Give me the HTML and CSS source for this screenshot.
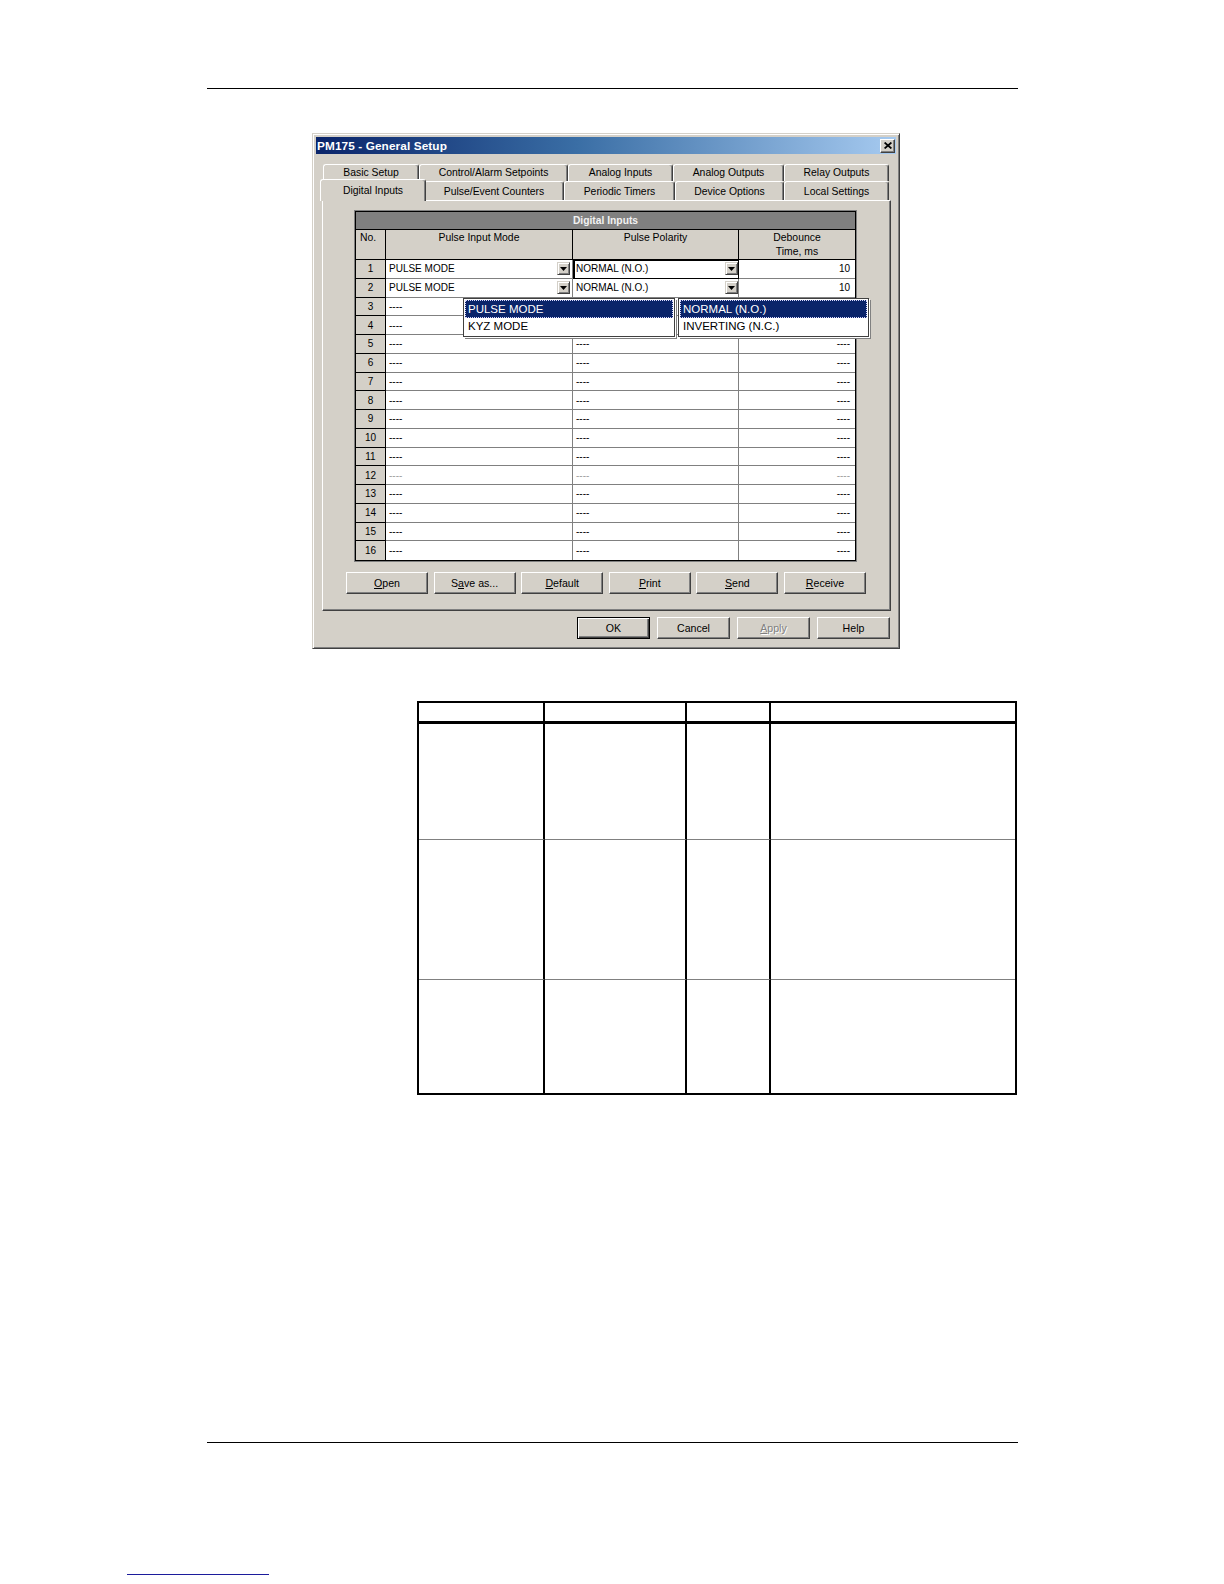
FILE: index.html
```html
<!DOCTYPE html>
<html lang="en">
<head>
<meta charset="utf-8">
<title>PM175 - General Setup</title>
<link rel="stylesheet" href="styles.css">
</head>
<body>
<div class="page">
  <div class="rule rule-top"></div>

  <div class="dialog">
    <div class="titlebar">
      <span class="title">PM175 - General Setup</span>
      <span class="close-btn"><svg width="8" height="7" viewBox="0 0 8 7"><path d="M0.6 0.5 L7.4 6.5 M7.4 0.5 L0.6 6.5" stroke="#000" stroke-width="1.7" fill="none"/></svg></span>
    </div>

    <div class="tabctl">
      <div class="tabrow tabrow-back">
        <div class="tab">Basic Setup</div>
        <div class="tab">Control/Alarm Setpoints</div>
        <div class="tab">Analog Inputs</div>
        <div class="tab">Analog Outputs</div>
        <div class="tab">Relay Outputs</div>
      </div>
      <div class="tabrow tabrow-front">
        <div class="tab active">Digital Inputs</div>
        <div class="tab">Pulse/Event Counters</div>
        <div class="tab">Periodic Timers</div>
        <div class="tab">Device Options</div>
        <div class="tab">Local Settings</div>
      </div>

      <div class="panel">
        <div class="grid-frame">
          <div class="grid-inner">
            <div class="dtable">
              <div class="hdr">Digital Inputs</div>
              <div class="ch ch-no">No.</div>
              <div class="ch">Pulse Input Mode</div>
              <div class="ch">Pulse Polarity</div>
              <div class="ch ch-last">Debounce<br>Time, ms</div>

              <div class="no">1</div>
              <div class="c combo"><span>PULSE MODE</span><span class="ddbtn mode-btn"><svg width="7" height="4" viewBox="0 0 7 4"><path d="M0 0 H7 L3.5 4 Z" fill="#000"/></svg></span></div>
              <div class="c combo focus"><span>NORMAL (N.O.)</span><span class="ddbtn pol-btn"><svg width="7" height="4" viewBox="0 0 7 4"><path d="M0 0 H7 L3.5 4 Z" fill="#000"/></svg></span></div>
              <div class="c deb">10</div>

              <div class="no">2</div>
              <div class="c combo"><span>PULSE MODE</span><span class="ddbtn mode-btn"><svg width="7" height="4" viewBox="0 0 7 4"><path d="M0 0 H7 L3.5 4 Z" fill="#000"/></svg></span></div>
              <div class="c combo"><span>NORMAL (N.O.)</span><span class="ddbtn pol-btn"><svg width="7" height="4" viewBox="0 0 7 4"><path d="M0 0 H7 L3.5 4 Z" fill="#000"/></svg></span></div>
              <div class="c deb">10</div>

              <div class="no">3</div><div class="c">----</div><div class="c">----</div><div class="c deb">----</div>
              <div class="no">4</div><div class="c">----</div><div class="c">----</div><div class="c deb">----</div>
              <div class="no">5</div><div class="c">----</div><div class="c">----</div><div class="c deb">----</div>
              <div class="no">6</div><div class="c">----</div><div class="c">----</div><div class="c deb">----</div>
              <div class="no">7</div><div class="c">----</div><div class="c">----</div><div class="c deb">----</div>
              <div class="no">8</div><div class="c">----</div><div class="c">----</div><div class="c deb">----</div>
              <div class="no">9</div><div class="c">----</div><div class="c">----</div><div class="c deb">----</div>
              <div class="no">10</div><div class="c">----</div><div class="c">----</div><div class="c deb">----</div>
              <div class="no">11</div><div class="c">----</div><div class="c">----</div><div class="c deb">----</div>
              <div class="no">12</div><div class="c dim">----</div><div class="c dim">----</div><div class="c deb dim">----</div>
              <div class="no">13</div><div class="c">----</div><div class="c">----</div><div class="c deb">----</div>
              <div class="no">14</div><div class="c">----</div><div class="c">----</div><div class="c deb">----</div>
              <div class="no">15</div><div class="c">----</div><div class="c">----</div><div class="c deb">----</div>
              <div class="no last">16</div><div class="c last">----</div><div class="c last">----</div><div class="c deb last">----</div>
            </div>

            <div class="droplist drop-mode">
              <div class="opt sel">PULSE MODE</div>
              <div class="opt">KYZ MODE</div>
            </div>
            <div class="droplist drop-pol">
              <div class="opt sel">NORMAL (N.O.)</div>
              <div class="opt">INVERTING (N.C.)</div>
            </div>
          </div>
        </div>

        <div class="btnrow">
          <div class="btn"><u>O</u>pen</div>
          <div class="btn">S<u>a</u>ve as...</div>
          <div class="btn"><u>D</u>efault</div>
          <div class="btn"><u>P</u>rint</div>
          <div class="btn"><u>S</u>end</div>
          <div class="btn"><u>R</u>eceive</div>
        </div>
      </div>
    </div>

    <div class="dlg-buttons">
      <div class="btn sm default">OK</div>
      <div class="btn sm">Cancel</div>
      <div class="btn sm disabled"><u>A</u>pply</div>
      <div class="btn sm">Help</div>
    </div>
  </div>

  <div class="spec">
    <div class="sc h"></div><div class="sc h"></div><div class="sc h"></div><div class="sc h lastcol"></div>
    <div class="sc r"></div><div class="sc r"></div><div class="sc r"></div><div class="sc r lastcol"></div>
    <div class="sc r"></div><div class="sc r"></div><div class="sc r"></div><div class="sc r lastcol"></div>
    <div class="sc"></div><div class="sc"></div><div class="sc"></div><div class="sc lastcol"></div>
  </div>

  <div class="rule rule-bottom"></div>
  <div class="link-line"></div>
</div>
</body>
</html>
```

FILE: styles.css
```css
html, body {
  margin: 0;
  padding: 0;
  background: #fff;
}

body {
  font-family: "Liberation Sans", Arial, sans-serif;
  color: #000;
}

.page {
  width: 1224px;
  min-height: 1584px;
  overflow: hidden;
}

.rule {
  height: 1px;
  background: #000;
  width: 811px;
}

.rule-top {
  margin: 88px 0 0 207px;
}

.rule-bottom {
  margin: 347px 0 0 207px;
}

.link-line {
  margin: 131px 0 0 127px;
  width: 142px;
  height: 1px;
  background: #1c1c9c;
}

/* ---------- dialog ---------- */
.dialog {
  box-sizing: border-box;
  margin: 44px 0 0 312px;
  width: 588px;
  height: 516px;
  padding: 3px;
  background: #d4d0c8;
  border: 1px solid;
  border-color: #d4d0c8 #404040 #404040 #d4d0c8;
  box-shadow: inset 1px 1px 0 #fff, inset -1px -1px 0 #808080;
  display: flex;
  flex-direction: column;
}

.titlebar {
  height: 17px;
  flex: none;
  display: flex;
  align-items: center;
  justify-content: space-between;
  padding: 0 1px 0 1px;
  background: linear-gradient(to right, #0a246a 0%, #3a6ea5 45%, #a6caf0 100%);
}

.title {
  color: #fff;
  font-weight: bold;
  font-size: 11.8px;
  letter-spacing: 0.1px;
  white-space: nowrap;
}

.close-btn {
  box-sizing: border-box;
  width: 15px;
  height: 14px;
  background: #d4d0c8;
  border: 1px solid;
  border-color: #fff #404040 #404040 #fff;
  box-shadow: inset -1px -1px 0 #808080;
  display: flex;
  align-items: center;
  justify-content: center;
}

.close-btn svg {
  display: block;
}

/* ---------- tabs ---------- */
.tabctl {
  margin: 10px 0 0 6px;
  width: 569px;
  flex: none;
}

.tabrow {
  display: grid;
  font-size: 10.4px;
}

.tabrow-back {
  margin-left: 1px;
  height: 17px;
  grid-template-columns: 96px 149px 105px 111px 105px;
}

.tabrow-front {
  height: 19px;
  grid-template-columns: 102px 140px 111px 109px 105px;
}

.tab {
  box-sizing: border-box;
  background: #d4d0c8;
  border-top: 1px solid #fff;
  border-left: 1px solid #fff;
  border-right: 1px solid #404040;
  box-shadow: inset -1px 0 0 #808080;
  border-radius: 3px 3px 0 0;
  text-align: center;
  line-height: 15px;
  white-space: nowrap;
}

.tabrow-front .tab {
  padding-top: 2px;
}

.tabrow-front .tab.active {
  position: relative;
  z-index: 2;
  margin: -2px -2px -1px -2px;
  padding-top: 3px;
}

.panel {
  box-sizing: border-box;
  height: 411px;
  border: 1px solid;
  border-color: #fff #404040 #404040 #fff;
  box-shadow: inset -1px -1px 0 #808080;
  padding: 9px 0 0 23px;
  background: #d4d0c8;
}

/* ---------- digital inputs grid ---------- */
.grid-frame {
  box-sizing: border-box;
  margin-left: 8px;
  width: 503px;
  height: 352px;
  border: 1px solid #808080;
}

.grid-inner {
  box-sizing: border-box;
  position: relative;
  height: 100%;
  border: 1px solid #000;
  background: #fff;
}

.dtable {
  display: grid;
  grid-template-columns: 30px 187px 166px 116px;
  grid-template-rows: 18px 30px repeat(16, 18.75px);
  font-size: 10px;
}

.hdr {
  grid-column: 1 / -1;
  box-sizing: border-box;
  background: #808080;
  border-bottom: 1px solid #000;
  color: #f2f2f2;
  font-weight: bold;
  font-size: 10.3px;
  text-align: center;
  line-height: 17px;
}

.ch {
  box-sizing: border-box;
  background: #d4d0c8;
  border-right: 1px solid #000;
  border-bottom: 1px solid #000;
  text-align: center;
  font-size: 10.4px;
  line-height: 14px;
  padding-top: 1px;
}

.ch-no {
  text-align: left;
  padding-left: 4px;
}

.ch-last {
  border-right: 0;
}

.no {
  box-sizing: border-box;
  background: #d4d0c8;
  border-right: 1px solid #000;
  border-bottom: 1px solid #000;
  display: flex;
  align-items: center;
  justify-content: center;
}

.c {
  box-sizing: border-box;
  border-right: 1px solid #808080;
  border-bottom: 1px solid #808080;
  display: flex;
  align-items: center;
  padding-left: 3px;
  white-space: nowrap;
}

.c.deb {
  border-right: 0;
  justify-content: flex-end;
  padding: 0 5px 0 0;
}

.last {
  border-bottom: 0;
}

.dim {
  color: #a0a0a0;
}

.combo {
  justify-content: space-between;
}

.c.focus {
  border-right-color: #000;
  border-bottom-color: #000;
  box-shadow: inset 2px 1px 0 #000;
}

.ddbtn {
  box-sizing: border-box;
  width: 13px;
  height: 13px;
  background: #d4d0c8;
  border: 1px solid;
  border-color: #d4d0c8 #404040 #404040 #d4d0c8;
  box-shadow: inset 1px 1px 0 #fff, inset -1px -1px 0 #808080;
  display: flex;
  align-items: center;
  justify-content: center;
}

.ddbtn svg {
  display: block;
}

.mode-btn {
  margin-right: 2px;
}

.pol-btn {
  margin-right: 0;
}

/* dropdown lists (overlays) */
.droplist {
  position: absolute;
  top: 86px;
  box-sizing: border-box;
  height: 39px;
  padding: 1px;
  background: #fff;
  border: 1px solid #404040;
  box-shadow: 1px 1px 0 #fff, 2px 2px 0 #808080;
  font-size: 11.5px;
  z-index: 3;
}

.drop-mode {
  left: 107px;
  width: 212px;
}

.drop-pol {
  left: 322px;
  width: 191px;
}

.opt {
  height: 17px;
  line-height: 17px;
  padding-left: 3px;
  white-space: nowrap;
}

.opt.sel {
  height: 18px;
  line-height: 18px;
  background: #0a246a;
  color: #fff;
  outline: 1px dotted #d8d8ff;
  outline-offset: -1px;
}

/* ---------- buttons ---------- */
.btnrow {
  margin-top: 10px;
  width: 520px;
  display: flex;
  justify-content: space-between;
}

.btn {
  box-sizing: border-box;
  width: 82px;
  height: 22px;
  background: #d4d0c8;
  border: 1px solid;
  border-color: #fff #404040 #404040 #fff;
  box-shadow: inset -1px -1px 0 #808080;
  display: flex;
  align-items: center;
  justify-content: center;
  font-size: 10.6px;
  white-space: nowrap;
}

.dlg-buttons {
  margin: 6px 6px 0 0;
  display: flex;
  justify-content: flex-end;
  gap: 7px;
}

.btn.sm {
  width: 73px;
}

.btn.default {
  border-color: #000;
  box-shadow: inset 1px 1px 0 #fff, inset -1px -1px 0 #404040, inset -2px -2px 0 #808080;
}

.btn.disabled {
  color: #808080;
  text-shadow: 1px 1px 0 #fff;
}

/* ---------- spec table ---------- */
.spec {
  box-sizing: border-box;
  margin: 52px 0 0 417px;
  width: 600px;
  height: 394px;
  border: 2px solid #000;
  display: grid;
  grid-template-columns: 126px 142px 84px 244px;
  grid-template-rows: 21px 116px 140px 113px;
}

.sc {
  box-sizing: border-box;
  border-right: 2px solid #000;
}

.sc.lastcol {
  border-right: 0;
}

.sc.h {
  border-bottom: 3px solid #000;
}

.sc.r {
  border-bottom: 1px solid #808080;
}
```
